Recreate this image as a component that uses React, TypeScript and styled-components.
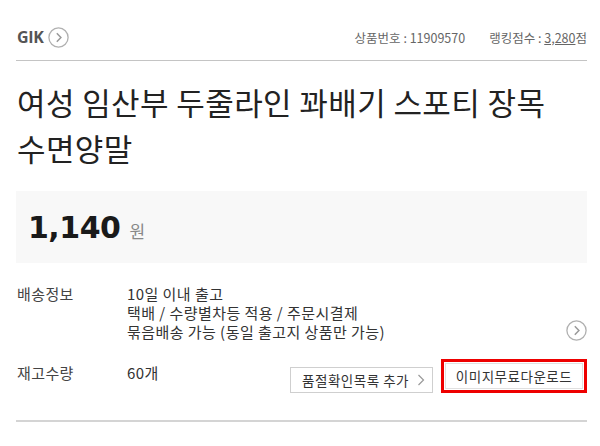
import React from "react";
import styled, { createGlobalStyle } from "styled-components";

const Global = createGlobalStyle`
  html, body { margin: 0; padding: 0; background: #fff; }
  body { font-family: "Noto Sans CJK KR", "Noto Sans", sans-serif; color: #333; }
`;

const Page = styled.div`
  width: 600px;
  height: 446px;
  box-sizing: border-box;
  padding: 0 13px 0 16px;
  overflow: hidden;
`;

const Header = styled.div`
  display: flex;
  align-items: center;
  justify-content: space-between;
  height: 61px;
  padding-top: 14px;
  box-sizing: border-box;
  border-bottom: 1px solid #c4c4c4;
`;

const Brand = styled.div`
  display: flex;
  align-items: center;
  gap: 4px;
  padding-left: 1px;
`;

const BrandName = styled.span`
  font-family: "Open Sans", "Noto Sans", sans-serif;
  font-weight: 700;
  font-size: 16px;
  color: #555;
  letter-spacing: -0.3px;
`;

const Meta = styled.div`
  display: flex;
  gap: 24px;
  font-size: 12.5px;
  color: #666;
`;

const MetaScore = styled.span`
  text-decoration: underline;
`;

const Title = styled.h1`
  margin: 0;
  padding: 18px 0 0 1px;
  font-size: 31px;
  font-weight: 400;
  line-height: 46px;
  letter-spacing: 0.4px;
  color: #222;
`;

const PriceBox = styled.div`
  margin-top: 20px;
  height: 72px;
  background: #f8f8f8;
  display: flex;
  align-items: center;
  padding-left: 12px;
  gap: 9px;
`;

const Price = styled.span`
  font-family: "DejaVu Sans", sans-serif;
  font-weight: 700;
  font-size: 30px;
  color: #1a1a1a;
  letter-spacing: -0.5px;
`;

const Won = styled.span`
  font-size: 17px;
  color: #888;
  margin-top: 6px;
`;

const InfoRow = styled.div<{ $top: number }>`
  display: grid;
  grid-template-columns: 111px 1fr auto;
  margin-top: ${(p) => p.$top}px;
  font-size: 15px;
  line-height: 19px;
  color: #333;
`;

const Label = styled.div`
  color: #444;
  padding-left: 1px;
  letter-spacing: 0.4px;
`;

const Lines = styled.div`
  display: flex;
  flex-direction: column;
  letter-spacing: 0.45px;
`;

const EndCell = styled.div`
  display: flex;
  align-items: flex-end;
  gap: 8px;
`;

const Button = styled.button`
  display: flex;
  align-items: center;
  gap: 8px;
  height: 26px;
  padding: 0 7px 0 11px;
  background: #fff;
  border: 1px solid #cfcfcf;
  font-family: "Noto Sans CJK KR", sans-serif;
  font-size: 13.5px;
  color: #333;
  letter-spacing: 0.5px;
`;

const Highlight = styled.div`
  border: 3px solid #ee0000;
  padding: 1px;
  margin-top: -4px;
`;

const PlainButton = styled(Button)`
  padding: 0;
  border-color: #e0e0e0;
  width: 138px;
  justify-content: center;
`;

const Divider = styled.div`
  margin-top: 27px;
  height: 2px;
  background: #d4d4d4;
`;

const CircleArrow = ({ size = 21 }: { size?: number }) => (
  <svg width={size} height={size} viewBox="0 0 21 21">
    <circle cx="10.5" cy="10.5" r="9.6" fill="#fff" stroke="#b0b0b0" strokeWidth="1.3" />
    <path d="M8.8 6.3 L12.9 10.5 L8.8 14.7" fill="none" stroke="#9a9a9a" strokeWidth="1.5" />
  </svg>
);

const Chevron = () => (
  <svg width="8" height="12" viewBox="0 0 8 12">
    <path d="M1.5 1 L6.5 6 L1.5 11" fill="none" stroke="#999" strokeWidth="1.2" />
  </svg>
);

export default function App() {
  return (
    <Page>
      <Global />
      <Header>
        <Brand>
          <BrandName>GIK</BrandName>
          <CircleArrow />
        </Brand>
        <Meta>
          <span>상품번호 : 11909570</span>
          <span>
            랭킹점수 : <MetaScore>3,280</MetaScore>점
          </span>
        </Meta>
      </Header>
      <Title>
        여성 임산부 두줄라인 꽈배기 스포티 장목
        <br />
        수면양말
      </Title>
      <PriceBox>
        <Price>1,140</Price>
        <Won>원</Won>
      </PriceBox>
      <InfoRow $top={21}>
        <Label>배송정보</Label>
        <Lines>
          <span>10일 이내 출고</span>
          <span>택배 / 수량별차등 적용 / 주문시결제</span>
          <span>묶음배송 가능 (동일 출고지 상품만 가능)</span>
        </Lines>
        <EndCell>
          <CircleArrow />
        </EndCell>
      </InfoRow>
      <InfoRow $top={22}>
        <Label>재고수량</Label>
        <Lines>
          <span>60개</span>
        </Lines>
        <EndCell>
          <Button>
            품절확인목록 추가 <Chevron />
          </Button>
          <Highlight>
            <PlainButton>이미지무료다운로드</PlainButton>
          </Highlight>
        </EndCell>
      </InfoRow>
      <Divider />
    </Page>
  );
}
